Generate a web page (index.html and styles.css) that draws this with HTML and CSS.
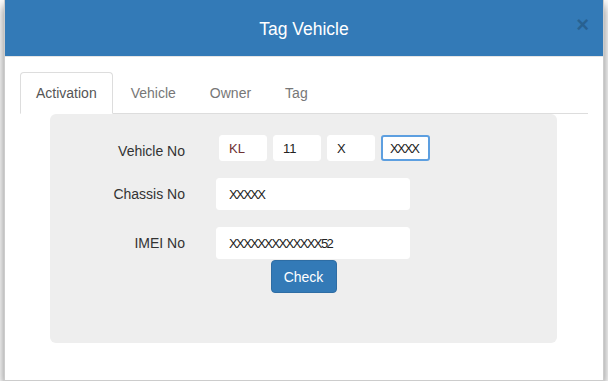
FILE: index.html
```html
<!DOCTYPE html>
<html>
<head>
<meta charset="utf-8">
<link rel="stylesheet" href="styles.css">
</head>
<body>
<div class="modal">
  <div class="modal-header">
    <span></span>
    <h4 class="modal-title">Tag Vehicle</h4>
    <button class="close">&times;</button>
  </div>
  <div class="modal-body">
    <ul class="nav-tabs">
      <li class="tab active">Activation</li>
      <li class="tab">Vehicle</li>
      <li class="tab">Owner</li>
      <li class="tab">Tag</li>
    </ul>
    <div class="panel">
      <div class="form">
        <label class="lbl first">Vehicle No</label>
        <div class="vno">
          <input class="vin red" value="KL">
          <input class="vin" value="11">
          <input class="vin" value="X">
          <input class="vin focus xs" value="XXXX">
        </div>
        <label class="lbl">Chassis No</label>
        <input class="field xs" value="XXXXX">
        <label class="lbl">IMEI No</label>
        <input class="field xs" value="XXXXXXXXXXXXX52">
      </div>
      <div class="actions"><button class="btn">Check</button></div>
    </div>
  </div>
</div>
</body>
</html>
```
FILE: styles.css
```css
html, body {
  margin: 0;
  padding: 0;
  background: #fff;
}
body {
  font-family: "Liberation Sans", Arial, sans-serif;
  font-size: 14px;
  color: #333;
}
.modal {
  margin-left: 4px;
  width: 600px;
  box-sizing: border-box;
  background: #fff;
  border: 1px solid rgba(0,0,0,.2);
  border-top: 0;
  box-shadow: 0 5px 10px rgba(0,0,0,.5);
}
.modal-header {
  height: 56px;
  background: #337ab7;
  border-bottom: 1px solid #e5e5e5;
  display: grid;
  grid-template-columns: 1fr auto 1fr;
  align-items: center;
  padding: 0 15px;
}
.modal-title {
  margin: 0;
  color: #fff;
  font-size: 17.5px;
  font-weight: normal;
  line-height: 24px;
  padding-top: 1px;
}
.close {
  justify-self: end;
  background: none;
  border: 0;
  padding: 0;
  margin-top: -6px;
  margin-right: -1px;
  font-family: "Liberation Sans", Arial, sans-serif;
  font-size: 22px;
  font-weight: bold;
  line-height: 1;
  color: #000;
  opacity: .2;
}
.modal-body {
  padding: 15px 15px 37px;
}
.nav-tabs {
  list-style: none;
  margin: 0;
  padding: 0;
  display: flex;
  border-bottom: 1px solid #ddd;
}
.tab {
  padding: 10px 15px;
  line-height: 20px;
  margin-right: 2px;
  margin-bottom: -1px;
  border: 1px solid transparent;
  border-radius: 4px 4px 0 0;
  color: #777;
}
.tab.active {
  color: #555;
  background: #fff;
  border-color: #ddd #ddd transparent;
}
.panel {
  margin-left: 30px;
  width: 507px;
  height: 229px;
  box-sizing: border-box;
  background: #eee;
  border-radius: 6px;
  padding-top: 21px;
}
.form {
  display: grid;
  grid-template-columns: 135px 194px;
  column-gap: 31px;
  row-gap: 17px;
  align-items: center;
}
.lbl {
  text-align: right;
  color: #333;
}
.lbl.first {
  padding-top: 6px;
}
.vno {
  display: flex;
  gap: 6px;
  margin-left: 3px;
}
input {
  font-family: "Liberation Sans", Arial, sans-serif;
  font-size: 13px;
  color: #222;
  background: #fff;
  border: 1px solid #fff;
  border-radius: 3px;
  box-sizing: border-box;
  outline: none;
  margin: 0;
}
.vin {
  width: 48px;
  height: 26px;
  padding: 0 9px;
}
.vin.red { color: #6e3232; }
.vin.focus {
  width: 49px;
  border: 2px solid #5d9fe0;
  padding: 0 7px;
}
.field {
  width: 194px;
  height: 32px;
  padding: 0 12px;
}
.xs { letter-spacing: -1.6px; }
.actions {
  display: flex;
  justify-content: center;
  margin-top: 1px;
}
.btn {
  width: 66px;
  height: 33px;
  background: #337ab7;
  border: 1px solid #2e6da4;
  border-radius: 4px;
  color: #fff;
  font-family: "Liberation Sans", Arial, sans-serif;
  font-size: 14px;
  padding: 0;
}
```
